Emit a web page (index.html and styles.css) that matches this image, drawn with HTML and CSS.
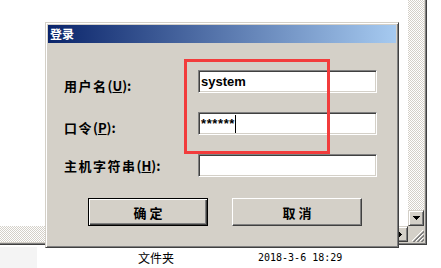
FILE: index.html
```html
<!DOCTYPE html>
<html lang="zh-CN">
<head>
    <meta charset="UTF-8">
    <title>登录</title>
    <link rel="stylesheet" href="styles.css">
</head>
<body>
    <div class="screen">
        <!-- explorer window behind the dialog -->
        <div class="explorer">
            <div class="view"></div>
            <div class="vscroll">
                <div class="track"></div>
                <div class="sbtn">
                    <svg width="7" height="4" shape-rendering="crispEdges"><path d="M0 0h7v1h-1v1h-1v1h-1v1h-1v-1h-1v-1h-1v-1h-1z"/></svg>
                </div>
            </div>
            <div class="hscroll">
                <div class="track"></div>
                <div class="sbtn">
                    <svg width="4" height="7" shape-rendering="crispEdges"><path d="M0 0h1v1h1v1h1v1h1v1h-1v1h-1v1h-1v1h-1z"/></svg>
                </div>
            </div>
            <div class="grip">
                <svg width="12" height="12" shape-rendering="crispEdges">
                    <path d="M11 0L0 11M11 4L4 11M11 8L8 11" stroke="#fff" stroke-width="1"/>
                    <path d="M12 1L1 12M12 2L2 12M12 5L5 12M12 6L6 12M12 9L9 12M12 10L10 12" stroke="#808080" stroke-width="1"/>
                </svg>
            </div>
        </div>

        <div class="file-row">
            <div class="col-icon"></div>
            <div class="col-type">文件夹</div>
            <div class="col-date">2018-3-6 18:29</div>
        </div>

        <!-- login dialog -->
        <div class="dialog">
            <div class="titlebar">登录</div>
            <div class="dlg-body">
                <div class="login-form">
                    <label class="lbl">用户名<span class="key">(<u>U</u>):</span></label>
                    <div class="field">system</div>
                    <label class="lbl">口令<span class="key">(<u>P</u>):</span></label>
                    <div class="field pwd">******<span class="caret"></span></div>
                    <label class="lbl last">主机字符串<span class="key">(<u>H</u>):</span></label>
                    <div class="field"></div>
                </div>
                <div class="buttons">
                    <button class="btn default">确定</button>
                    <button class="btn cancel">取消</button>
                </div>
            </div>
        </div>

        <div class="highlight"></div>
    </div>
</body>
</html>
```

FILE: styles.css
```css
body {
    margin: 0;
    background: #fff;
    font-family: "Noto Sans CJK SC", sans-serif;
    color: #000;
}

.screen {
    position: relative;
    width: 441px;
    height: 268px;
    overflow: hidden;
}

/* background window */
.explorer {
    display: grid;
    grid-template-columns: 408px 16px;
    grid-template-rows: 226px 16px;
    width: 427px;
    box-sizing: border-box;
    padding: 0 2px 2px 0;
    background: #d4d0c8;
    border-right: 1px solid #404040;
    border-bottom: 1px solid #404040;
    box-shadow: inset -1px -1px #808080;
}

.view {
    background: #fff;
}

.track {
    flex: 1;
    background: repeating-conic-gradient(#fff 0 25%, #d4d0c8 0 50%) 0 0 / 2px 2px;
}

.vscroll {
    display: flex;
    flex-direction: column;
}

.hscroll {
    display: flex;
}

.sbtn {
    width: 16px;
    height: 16px;
    box-sizing: border-box;
    display: flex;
    align-items: center;
    justify-content: center;
    background: #d4d0c8;
    border: 1px solid;
    border-color: #d4d0c8 #404040 #404040 #d4d0c8;
    box-shadow: inset 1px 1px #fff, inset -1px -1px #808080;
}

.grip {
    display: flex;
    align-items: flex-end;
    justify-content: flex-end;
    background: #d4d0c8;
}

.file-row {
    display: flex;
    margin-top: 2px;
    height: 21px;
    line-height: 21px;
    font-size: 12px;
}

.col-icon {
    width: 37px;
    background: #f4f4f4;
}

.col-type {
    margin-left: 101px;
    width: 120px;
}

.col-date {
    font-family: "DejaVu Sans Mono", monospace;
    font-size: 10px;
}

/* dialog */
.dialog {
    position: absolute;
    left: 45px;
    top: 22px;
    width: 354px;
    height: 226px;
    box-sizing: border-box;
    padding: 2px;
    background: #d4d0c8;
    border: 1px solid;
    border-color: #d4d0c8 #404040 #404040 #d4d0c8;
    box-shadow: inset 1px 1px #fff, inset -1px -1px #808080;
}

.titlebar {
    height: 18px;
    line-height: 18px;
    padding-left: 2px;
    background: linear-gradient(to right, #0a246a, #a6caf0);
    color: #fff;
    font-size: 12px;
    font-weight: bold;
}

.dlg-body {
    padding: 27px 0 0 16px;
}

.login-form {
    display: grid;
    grid-template-columns: 134px 179px;
    grid-auto-rows: 23px;
    row-gap: 19px;
    align-items: center;
}

.lbl {
    font-size: 13px;
    font-weight: bold;
    letter-spacing: 1.5px;
    padding-top: 7px;
}

.lbl .key {
    letter-spacing: 0;
}

.lbl.last {
    padding-top: 0;
}

.field {
    height: 23px;
    box-sizing: border-box;
    padding-left: 2px;
    background: #fff;
    border: 1px solid;
    border-color: #808080 #fff #fff #808080;
    box-shadow: inset 1px 1px #404040, inset -1px -1px #d4d0c8;
    font-family: "Liberation Sans", sans-serif;
    font-size: 13px;
    font-weight: bold;
    line-height: 19px;
    padding-top: 1px;
}

.pwd {
    letter-spacing: 0.6px;
}

.caret {
    display: inline-block;
    width: 1px;
    height: 18px;
    background: #000;
    vertical-align: -5px;
}

.buttons {
    display: flex;
    gap: 24px;
    margin: 21px 0 0 24px;
}

.btn {
    height: 28px;
    box-sizing: border-box;
    background: #d4d0c8;
    border: 1px solid;
    border-color: #fff #404040 #404040 #fff;
    box-shadow: inset -1px -1px #808080;
    font-family: "Noto Sans CJK SC", sans-serif;
    font-size: 13px;
    font-weight: bold;
    letter-spacing: 3px;
    color: #000;
    padding: 0 0 0 3px;
}

.btn.default {
    width: 120px;
    border: 1px solid #000;
    box-shadow: inset 1px 1px #fff, inset -1px -1px #404040, inset -2px -2px #808080;
}

.btn.cancel {
    width: 130px;
}

/* red annotation box */
.highlight {
    position: absolute;
    left: 184px;
    top: 59px;
    width: 146px;
    height: 95px;
    box-sizing: border-box;
    border: 3px solid #f23c3c;
}
```
